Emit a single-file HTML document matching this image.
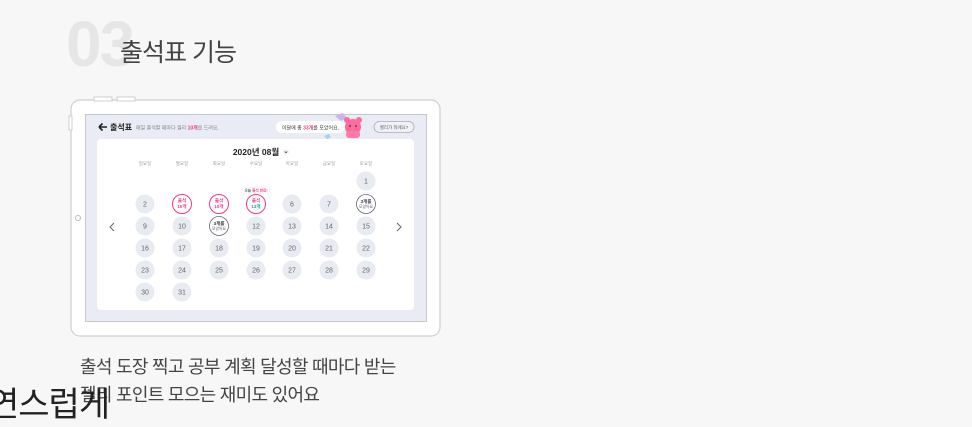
<!DOCTYPE html>
<html><head><meta charset="utf-8">
<style>
html,body{margin:0;padding:0;}
body{width:972px;height:423px;overflow:hidden;background:#f7f7f7;position:relative;font-family:"Liberation Sans","Noto Sans CJK KR",sans-serif;}
.n03{position:absolute;left:66px;top:8px;font-size:64px;line-height:72px;color:#e6e6e6;font-weight:bold;letter-spacing:-2px;}
.ttl{position:absolute;left:120px;top:35px;font-size:25px;line-height:36px;color:#444;letter-spacing:-1px;}
.desc{position:absolute;left:80px;top:353px;font-size:18px;line-height:28px;color:#444;letter-spacing:-0.7px;}
.big{position:absolute;left:-12px;top:383px;font-size:34px;line-height:44px;color:#222;letter-spacing:-1px;}
svg{position:absolute;left:0;top:0;}
</style></head><body>
<div class="n03">03</div>
<div class="ttl">출석표 기능</div>
<svg width="972" height="423" viewBox="0 0 972 423" font-family="Liberation Sans, Noto Sans CJK KR, sans-serif">
<rect x="71" y="100" width="369" height="236" rx="9" fill="#fff" stroke="#cfcfd3" stroke-width="1.2"/>
<rect x="94" y="97" width="18" height="4" fill="#fff" stroke="#cfcfd3" stroke-width="1"/>
<rect x="117" y="97" width="18" height="4" fill="#fff" stroke="#cfcfd3" stroke-width="1"/>
<rect x="69" y="116" width="3" height="14" fill="#fff" stroke="#cfcfd3" stroke-width="1"/>
<circle cx="78" cy="218" r="2.5" fill="#fff" stroke="#bbb"/>
<rect x="85.5" y="114.5" width="341" height="207" fill="#e9ecf4" stroke="#c6c8ce"/>
<path d="M99 127 h8 M99 127 l3.5 -3.5 M99 127 l3.5 3.5" stroke="#222" stroke-width="1.6" fill="none"/>
<text x="110" y="130" font-size="8" font-weight="bold" fill="#222">출석표</text>
<text x="136" y="129.5" font-size="5" fill="#888">매일 출석할 때마다 젤리 <tspan fill="#ee3a86" font-weight="bold">10개</tspan>를 드려요.</text>
<rect x="276" y="121" width="69" height="12" rx="6" fill="#fff"/>
<text x="310.5" y="129.5" font-size="5" fill="#333" text-anchor="middle">이달에 총 <tspan fill="#ee3a86" font-weight="bold">33개</tspan>를 모았어요.</text>
<path d="M335 116 l8 -3 l4 5 l-6 3z" fill="#c9b6f0"/>
<path d="M324 136 l5 -2 l2 3 l-4 2z" fill="#9ed4ef"/>
<circle cx="353" cy="127" r="8" fill="#ff6b9a"/>
<circle cx="347" cy="120" r="3" fill="#ff6b9a"/><circle cx="359" cy="120" r="3" fill="#ff6b9a"/>
<rect x="346" y="131" width="14" height="7" rx="3" fill="#ff7aa6"/>
<circle cx="350" cy="126" r="0.9" fill="#333"/><circle cx="356" cy="126" r="0.9" fill="#333"/>
<rect x="374" y="121.5" width="40" height="11" rx="5.5" fill="#f0f1f6" stroke="#aab" stroke-width="0.8"/>
<text x="394" y="129" font-size="4.5" fill="#666" text-anchor="middle">젤리가 뭐에요?</text>
<rect x="97" y="139" width="317" height="171" rx="4" fill="#fff"/>
<text x="256" y="155" font-size="8.5" font-weight="bold" fill="#222" text-anchor="middle">2020년 08월</text>
<circle cx="286" cy="152" r="3" fill="#f0f0f4"/>
<path d="M284.8 151.5 l1.2 1.2 l1.2 -1.2" stroke="#333" stroke-width="0.7" fill="none"/>
<g font-size="4.5" fill="#999" text-anchor="middle">
<text x="145" y="165">일요일</text><text x="182" y="165">월요일</text><text x="219" y="165">화요일</text><text x="256" y="165">수요일</text><text x="292" y="165">목요일</text><text x="329" y="165">금요일</text><text x="366" y="165">토요일</text>
</g>
<path d="M114 223 l-4 4 l4 4" stroke="#666" stroke-width="1" fill="none"/>
<path d="M397 223 l4 4 l-4 4" stroke="#666" stroke-width="1" fill="none"/>
<g font-size="7" fill="#666" text-anchor="middle">
<circle cx="366" cy="181" r="9.5" fill="#e9ebf3"/><text x="366" y="183.5">1</text>
<circle cx="145" cy="204" r="9.5" fill="#e9ebf3"/><text x="145" y="206.5">2</text>
<circle cx="292" cy="204" r="9.5" fill="#e9ebf3"/><text x="292" y="206.5">6</text>
<circle cx="329" cy="204" r="9.5" fill="#e9ebf3"/><text x="329" y="206.5">7</text>
<circle cx="145" cy="226" r="9.5" fill="#e9ebf3"/><text x="145" y="228.5">9</text>
<circle cx="182" cy="226" r="9.5" fill="#e9ebf3"/><text x="182" y="228.5">10</text>
<circle cx="256" cy="226" r="9.5" fill="#e9ebf3"/><text x="256" y="228.5">12</text>
<circle cx="292" cy="226" r="9.5" fill="#e9ebf3"/><text x="292" y="228.5">13</text>
<circle cx="329" cy="226" r="9.5" fill="#e9ebf3"/><text x="329" y="228.5">14</text>
<circle cx="366" cy="226" r="9.5" fill="#e9ebf3"/><text x="366" y="228.5">15</text>
<circle cx="145" cy="248" r="9.5" fill="#e9ebf3"/><text x="145" y="250.5">16</text>
<circle cx="182" cy="248" r="9.5" fill="#e9ebf3"/><text x="182" y="250.5">17</text>
<circle cx="219" cy="248" r="9.5" fill="#e9ebf3"/><text x="219" y="250.5">18</text>
<circle cx="256" cy="248" r="9.5" fill="#e9ebf3"/><text x="256" y="250.5">19</text>
<circle cx="292" cy="248" r="9.5" fill="#e9ebf3"/><text x="292" y="250.5">20</text>
<circle cx="329" cy="248" r="9.5" fill="#e9ebf3"/><text x="329" y="250.5">21</text>
<circle cx="366" cy="248" r="9.5" fill="#e9ebf3"/><text x="366" y="250.5">22</text>
<circle cx="145" cy="270" r="9.5" fill="#e9ebf3"/><text x="145" y="272.5">23</text>
<circle cx="182" cy="270" r="9.5" fill="#e9ebf3"/><text x="182" y="272.5">24</text>
<circle cx="219" cy="270" r="9.5" fill="#e9ebf3"/><text x="219" y="272.5">25</text>
<circle cx="256" cy="270" r="9.5" fill="#e9ebf3"/><text x="256" y="272.5">26</text>
<circle cx="292" cy="270" r="9.5" fill="#e9ebf3"/><text x="292" y="272.5">27</text>
<circle cx="329" cy="270" r="9.5" fill="#e9ebf3"/><text x="329" y="272.5">28</text>
<circle cx="366" cy="270" r="9.5" fill="#e9ebf3"/><text x="366" y="272.5">29</text>
<circle cx="145" cy="292" r="9.5" fill="#e9ebf3"/><text x="145" y="294.5">30</text>
<circle cx="182" cy="292" r="9.5" fill="#e9ebf3"/><text x="182" y="294.5">31</text>
</g>
<g font-size="4.5" text-anchor="middle" font-weight="bold">
<circle cx="182" cy="204" r="9.5" fill="#fff" stroke="#ee3a86" stroke-width="1"/><text x="182" y="202" fill="#ee3a86">출석</text><text x="182" y="208" fill="#ee3a86">10개</text>
<circle cx="219" cy="204" r="9.5" fill="#fff" stroke="#ee3a86" stroke-width="1"/><text x="219" y="202" fill="#ee3a86">출석</text><text x="219" y="208" fill="#ee3a86">10개</text>
<circle cx="256" cy="204" r="9.5" fill="#fff" stroke="#ee3a86" stroke-width="1"/><text x="256" y="202" fill="#ee3a86">출석</text><text x="256" y="208" fill="#16a39a">13개</text>
<rect x="242" y="187" width="28" height="6" rx="3" fill="#fff" stroke="#e6e6ea" stroke-width="0.5"/><text x="256" y="191.5" font-size="3.6" fill="#555">오늘 <tspan fill="#ee3a86">출석 완료!</tspan></text>
<circle cx="366" cy="204" r="9.5" fill="#fff" stroke="#667" stroke-width="0.8"/><text x="366" y="203" fill="#334">3개를</text><text x="366" y="208" font-weight="normal" fill="#556" font-size="3.8">모았어요</text>
<circle cx="219" cy="226" r="9.5" fill="#fff" stroke="#667" stroke-width="0.8"/><text x="219" y="225" fill="#334">3개를</text><text x="219" y="230" font-weight="normal" fill="#556" font-size="3.8">모았어요</text>
</g>
</svg>
<div class="desc">출석 도장 찍고 공부 계획 달성할 때마다 받는<br>젤리 포인트 모으는 재미도 있어요</div>
<div class="big">연스럽게</div>
</body></html>
